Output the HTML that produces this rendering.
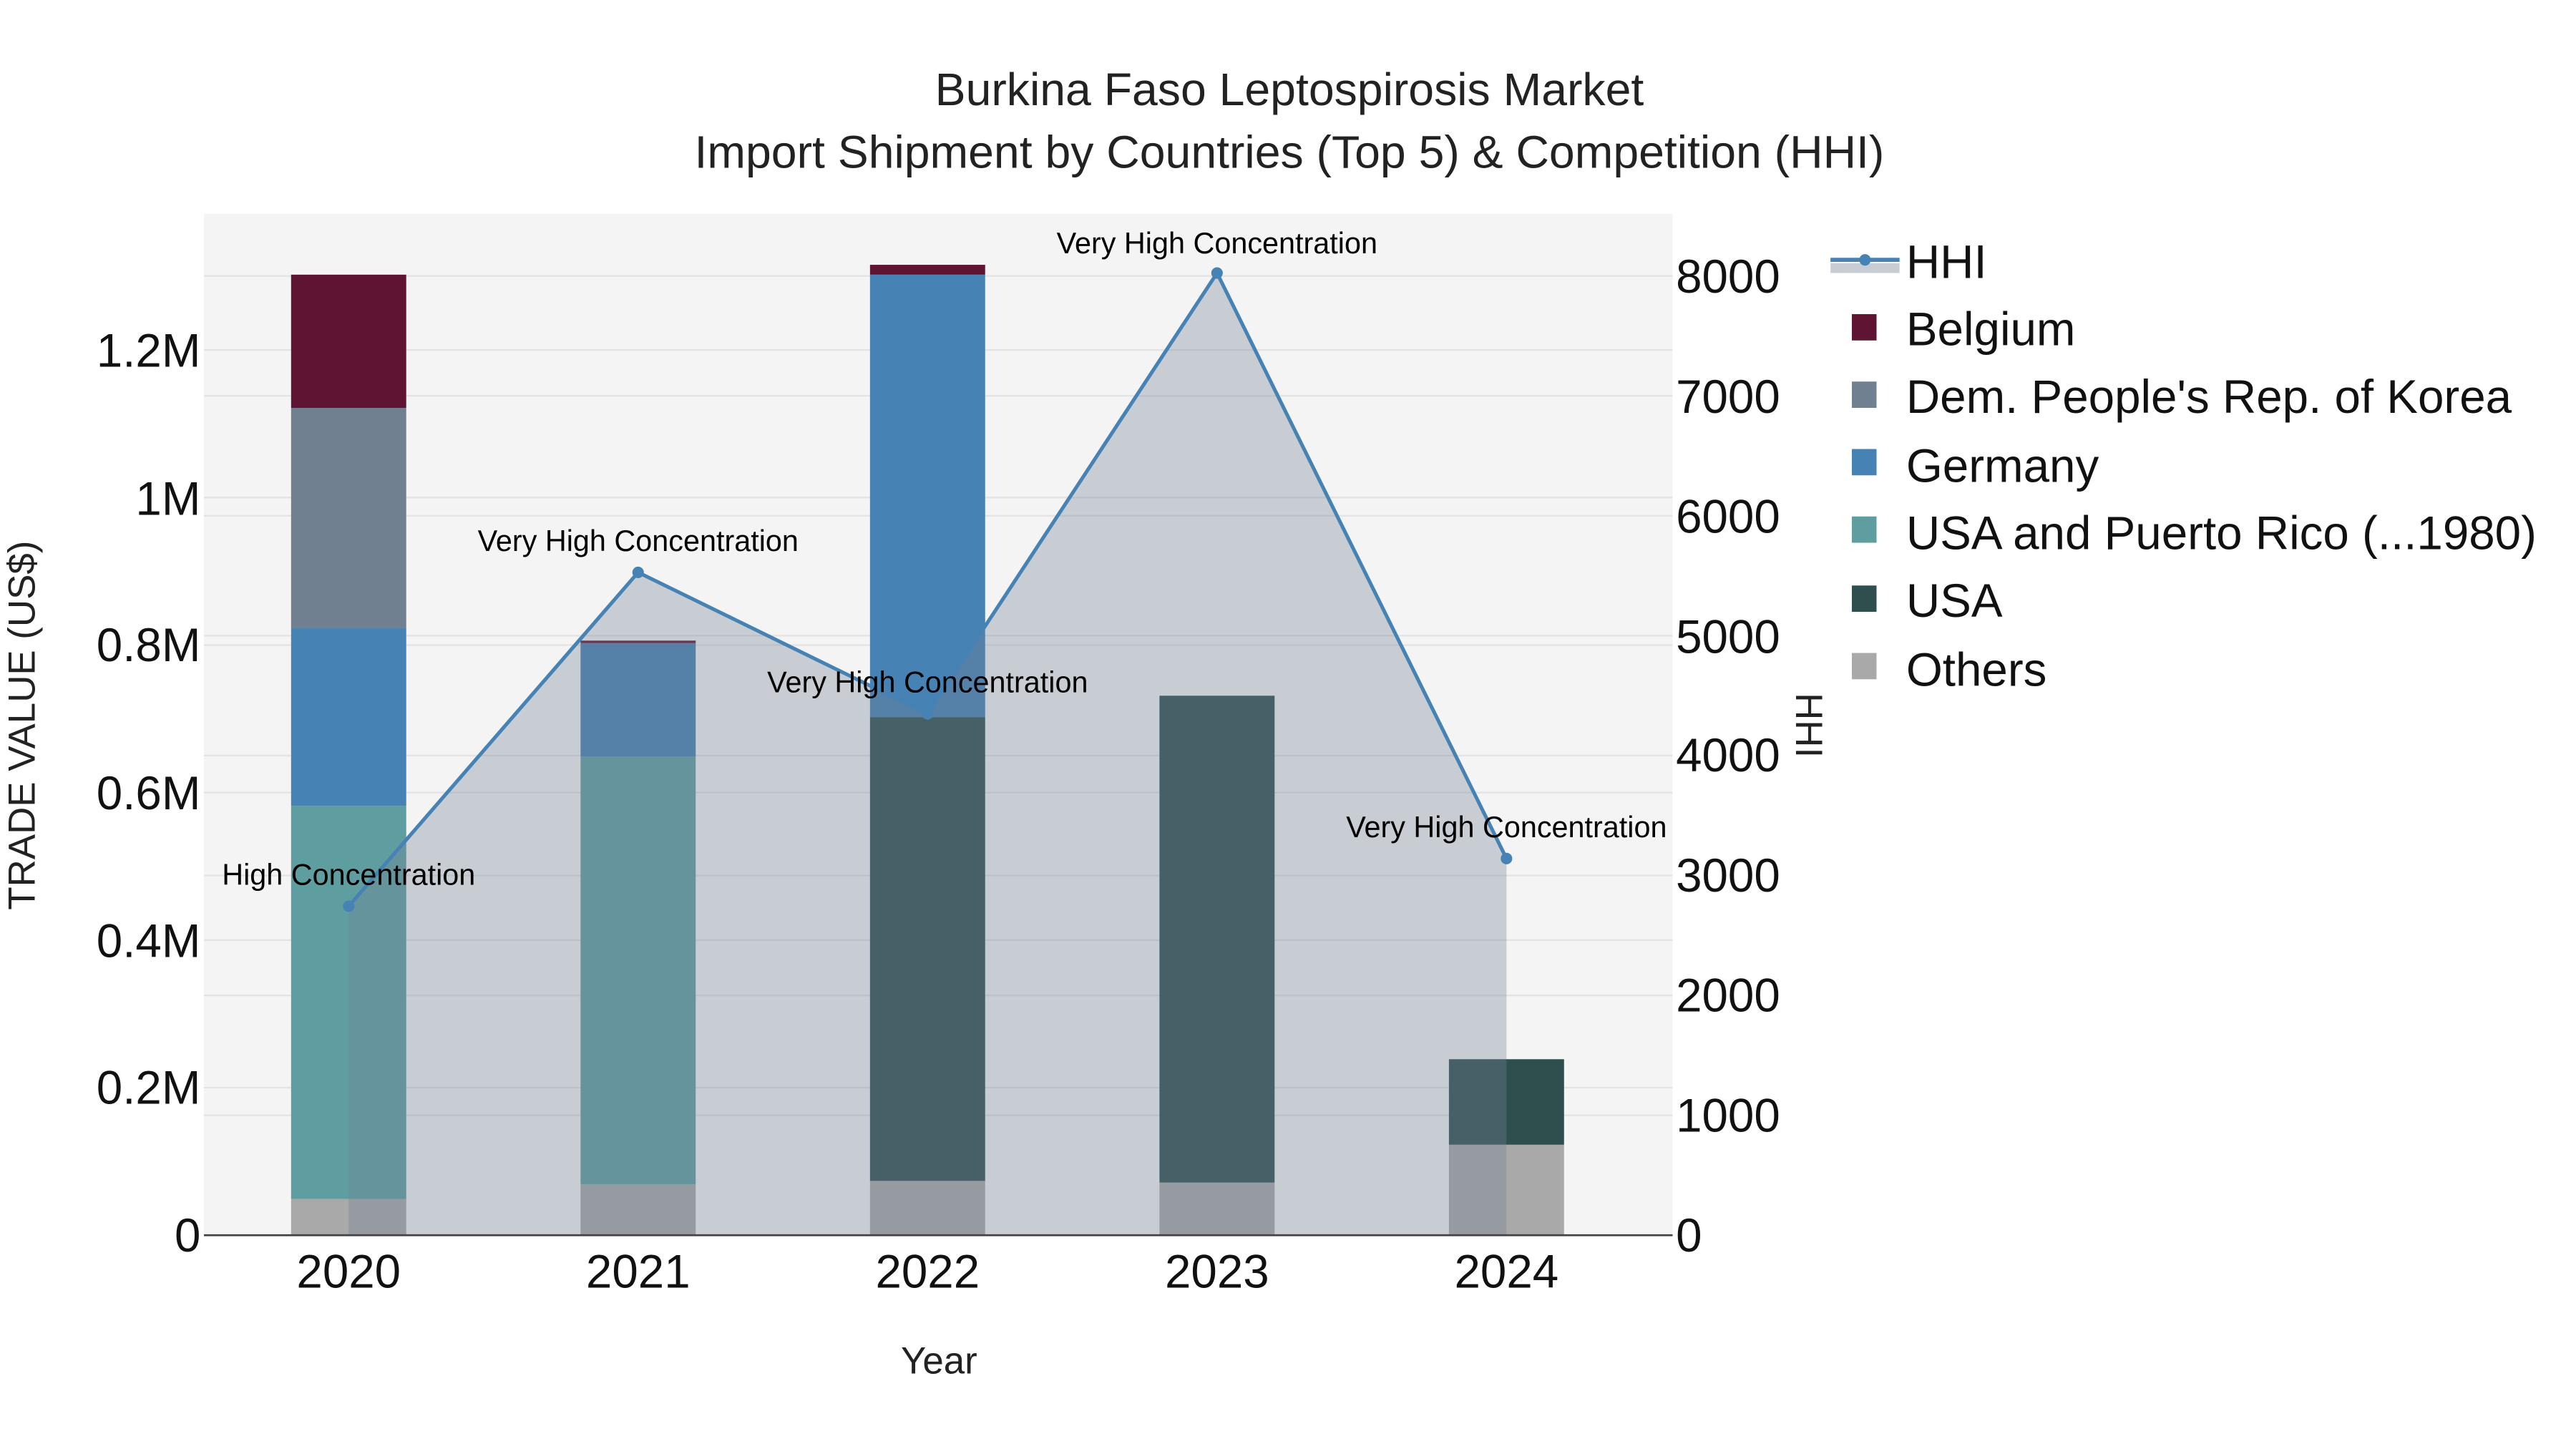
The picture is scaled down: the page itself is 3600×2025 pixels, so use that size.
<!DOCTYPE html>
<html><head><meta charset="utf-8"><style>html,body{margin:0;padding:0;background:#fff;}svg{display:block}</style></head>
<body>
<svg width="3600" height="2025" viewBox="0 0 1566.3 881" preserveAspectRatio="none" xmlns="http://www.w3.org/2000/svg" font-family="'Liberation Sans', sans-serif">
<rect x="0" y="0" width="1566.3" height="881" fill="#fff"/>
<rect x="124" y="130" width="893" height="621" fill="#f4f4f4"/>
<g stroke="#e3e3e3" stroke-width="1">
<line x1="124" x2="1017" y1="661.3" y2="661.3"/>
<line x1="124" x2="1017" y1="571.6" y2="571.6"/>
<line x1="124" x2="1017" y1="481.9" y2="481.9"/>
<line x1="124" x2="1017" y1="392.2" y2="392.2"/>
<line x1="124" x2="1017" y1="302.5" y2="302.5"/>
<line x1="124" x2="1017" y1="212.8" y2="212.8"/>
<line x1="124" x2="1017" y1="678.1" y2="678.1"/>
<line x1="124" x2="1017" y1="605.2" y2="605.2"/>
<line x1="124" x2="1017" y1="532.3" y2="532.3"/>
<line x1="124" x2="1017" y1="459.4" y2="459.4"/>
<line x1="124" x2="1017" y1="386.5" y2="386.5"/>
<line x1="124" x2="1017" y1="313.6" y2="313.6"/>
<line x1="124" x2="1017" y1="240.7" y2="240.7"/>
<line x1="124" x2="1017" y1="167.8" y2="167.8"/>
</g>
<g>
<rect x="177" y="729" width="70" height="22" fill="#a9a9a9"/>
<rect x="177" y="490" width="70" height="239" fill="#5f9ea0"/>
<rect x="177" y="382" width="70" height="108" fill="#4682b4"/>
<rect x="177" y="248" width="70" height="134" fill="#708090"/>
<rect x="177" y="167" width="70" height="81" fill="#5f1434"/>

<rect x="353" y="720" width="70" height="31" fill="#a9a9a9"/>
<rect x="353" y="460" width="70" height="260" fill="#5f9ea0"/>
<rect x="353" y="391" width="70" height="69" fill="#4682b4"/>
<rect x="353" y="389.5" width="70" height="1.5" fill="#5f1434"/>

<rect x="529" y="718" width="70" height="33" fill="#a9a9a9"/>
<rect x="529" y="436" width="70" height="282" fill="#2f4f4f"/>
<rect x="529" y="167" width="70" height="269" fill="#4682b4"/>
<rect x="529" y="161" width="70" height="6" fill="#5f1434"/>

<rect x="705" y="719" width="70" height="32" fill="#a9a9a9"/>
<rect x="705" y="423" width="70" height="296" fill="#2f4f4f"/>

<rect x="881" y="696" width="70" height="55" fill="#a9a9a9"/>
<rect x="881" y="644" width="70" height="52" fill="#2f4f4f"/>
</g>
<polygon points="212,751 212,551 388,348 564,434 740,166 916,522 916,751" fill="#738296" fill-opacity="0.34"/>
<polyline points="212,551 388,348 564,434 740,166 916,522" fill="none" stroke="#4682b4" stroke-width="2.2"/>
<g fill="#4682b4">
<circle cx="212" cy="551" r="3.5"/><circle cx="388" cy="348" r="3.5"/><circle cx="564" cy="434" r="3.5"/><circle cx="740" cy="166" r="3.5"/><circle cx="916" cy="522" r="3.5"/>
</g>
<line x1="124" x2="1017" y1="751" y2="751" stroke="#444" stroke-width="1.2"/>
<g font-size="18" text-anchor="middle" fill="#000">
<text x="212" y="538">High Concentration</text>
<text x="388" y="335">Very High Concentration</text>
<text x="564" y="421">Very High Concentration</text>
<text x="740" y="154">Very High Concentration</text>
<text x="916" y="509">Very High Concentration</text>
</g>
<g font-size="28" text-anchor="middle" fill="#222">
<text x="784" y="64">Burkina Faso Leptospirosis Market</text>
<text x="784" y="102">Import Shipment by Countries (Top 5) &amp; Competition (HHI)</text>
</g>
<g font-size="28.5" text-anchor="end" fill="#111">
<text x="122" y="761">0</text>
<text x="122" y="671">0.2M</text>
<text x="122" y="582">0.4M</text>
<text x="122" y="492">0.6M</text>
<text x="122" y="402">0.8M</text>
<text x="122" y="313">1M</text>
<text x="122" y="223">1.2M</text>
</g>
<g font-size="28.5" text-anchor="start" fill="#111">
<text x="1019" y="761">0</text>
<text x="1019" y="688">1000</text>
<text x="1019" y="615">2000</text>
<text x="1019" y="542">3000</text>
<text x="1019" y="469">4000</text>
<text x="1019" y="397">5000</text>
<text x="1019" y="324">6000</text>
<text x="1019" y="251">7000</text>
<text x="1019" y="178">8000</text>
</g>
<g font-size="28.5" text-anchor="middle" fill="#111">
<text x="212" y="783">2020</text>
<text x="388" y="783">2021</text>
<text x="564" y="783">2022</text>
<text x="740" y="783">2023</text>
<text x="916" y="783">2024</text>
</g>
<text x="571" y="835" font-size="23" text-anchor="middle" fill="#222">Year</text>
<text transform="translate(21,441) rotate(-90)" font-size="23" text-anchor="middle" fill="#222">TRADE VALUE (US$)</text>
<text transform="translate(1092,441) rotate(90)" font-size="23" text-anchor="middle" fill="#222">HHI</text>
<rect x="1113" y="160" width="42" height="6" fill="#c8cdd4"/>
<line x1="1113" x2="1155" y1="158" y2="158" stroke="#4682b4" stroke-width="2.5"/>
<circle cx="1134" cy="158" r="3.5" fill="#4682b4"/>
<rect x="1126" y="191" width="15" height="16" fill="#5f1434"/>
<rect x="1126" y="232" width="15" height="16" fill="#708090"/>
<rect x="1126" y="273" width="15" height="16" fill="#4682b4"/>
<rect x="1126" y="314" width="15" height="16" fill="#5f9ea0"/>
<rect x="1126" y="356" width="15" height="16" fill="#2f4f4f"/>
<rect x="1126" y="397" width="15" height="16" fill="#a9a9a9"/>
<g font-size="28.5" fill="#111">
<text x="1159" y="169">HHI</text>
<text x="1159" y="210">Belgium</text>
<text x="1159" y="251">Dem. People's Rep. of Korea</text>
<text x="1159" y="293">Germany</text>
<text x="1159" y="334">USA and Puerto Rico (...1980)</text>
<text x="1159" y="375">USA</text>
<text x="1159" y="417">Others</text>
</g>
</svg>
</body></html>
